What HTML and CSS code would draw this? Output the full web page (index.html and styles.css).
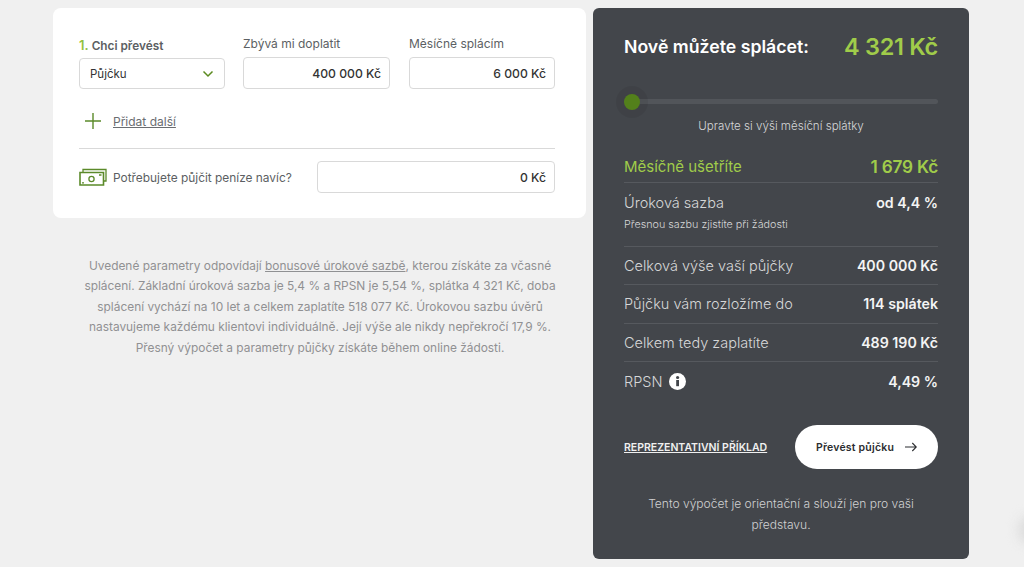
FILE: index.html
```html
<!DOCTYPE html>
<html lang="cs">
<head>
    <meta charset="UTF-8">
    <title>Převod půjčky</title>
    <link rel="stylesheet" href="styles.css">
</head>
<body>
    <div class="page">
        <div class="left">
            <div class="card">
                <div class="fields">
                    <div class="field field-select">
                        <div class="label label-strong"><span class="num">1.</span> Chci převést</div>
                        <div class="box box-select">
                            <span>Půjčku</span>
                            <svg class="chevron" width="12" height="8" viewBox="0 0 12 8"><path d="M1.5 1.5 6 6l4.5-4.5" fill="none" stroke="#5b8a1f" stroke-width="1.5"/></svg>
                        </div>
                    </div>
                    <div class="field">
                        <div class="label">Zbývá mi doplatit</div>
                        <div class="box box-value">400 000 Kč</div>
                    </div>
                    <div class="field field-last">
                        <div class="label">Měsíčně splácím</div>
                        <div class="box box-value">6 000 Kč</div>
                    </div>
                </div>
                <div class="add-row">
                    <svg width="16" height="16" viewBox="0 0 16 16"><path d="M8 0v16M0 8h16" stroke="#5b8a2a" stroke-width="1.4"/></svg>
                    <a class="add-link">Přidat další</a>
                </div>
                <div class="extra-row">
                    <svg class="money" width="28" height="18" viewBox="0 0 28 18" fill="none" stroke="#5b8a2a" stroke-width="1.3">
                        <path d="M4 4V1.5h23V13h-2"/>
                        <path d="M1 4.5h23.500V17H1z" stroke-width="1.6"/>
                        <circle cx="12.500" cy="11" r="2.600"/>
                        <path d="M3 14.800h2M20 7h2.500"/>
                    </svg>
                    <span class="extra-label">Potřebujete půjčit peníze navíc?</span>
                    <div class="box box-value box-extra">0 Kč</div>
                </div>
            </div>
            <p class="note">Uvedené parametry odpovídají <u>bonusové úrokové sazbě</u>, kterou získáte za včasné<br>splácení. Základní úroková sazba je 5,4 % a RPSN je 5,54 %, splátka 4 321 Kč, doba<br>splácení vychází na 10 let a celkem zaplatíte 518 077 Kč. Úrokovou sazbu úvěrů<br>nastavujeme každému klientovi individuálně. Její výše ale nikdy nepřekročí 17,9 %.<br>Přesný výpočet a parametry půjčky získáte během online žádosti.</p>
        </div>

        <div class="panel">
            <div class="panel-head">
                <span class="panel-title">Nově můžete splácet:</span>
                <span class="panel-amount">4 321 Kč</span>
            </div>
            <div class="slider"><span class="thumb"></span></div>
            <div class="slider-caption">Upravte si výši měsíční splátky</div>

            <div class="row row-green">
                <span>Měsíčně ušetříte</span>
                <b>1 679 Kč</b>
            </div>
            <div class="row row-rate">
                <div>
                    <span>Úroková sazba</span>
                    <small>Přesnou sazbu zjistíte při žádosti</small>
                </div>
                <b>od 4,4 %</b>
            </div>
            <div class="row"><span>Celková výše vaší půjčky</span><b>400 000 Kč</b></div>
            <div class="row"><span>Půjčku vám rozložíme do</span><b>114 splátek</b></div>
            <div class="row"><span>Celkem tedy zaplatíte</span><b>489 190 Kč</b></div>
            <div class="row row-last">
                <span class="rpsn">RPSN
                    <svg width="17" height="17" viewBox="0 0 17 17"><circle cx="8.500" cy="8.500" r="8.500" fill="#fff"/><rect x="7.200" y="7" width="2.800" height="6.200" fill="#43464b"/><circle cx="8.600" cy="4.500" r="1.600" fill="#43464b"/></svg>
                </span>
                <b>4,49 %</b>
            </div>

            <div class="actions">
                <a class="example-link">REPREZENTATIVNÍ PŘÍKLAD</a>
                <button class="cta">Převést půjčku
                    <svg width="12" height="10" viewBox="0 0 12 10"><path d="M0 5h11M7.300 1l4 4-4 4" fill="none" stroke="#2b2d30" stroke-width="1.100"/></svg>
                </button>
            </div>
            <p class="disclaimer">Tento výpočet je orientační a slouží jen pro vaši představu.</p>
        </div>
    </div>
    <div class="corner-blob"></div>
</body>
</html>
```

FILE: styles.css
```css
html, body {
    height: 100%;
}

body {
    margin: 0;
    background-color: #f0f0f0;
    font-family: Inter, "Liberation Sans", sans-serif;
    color: #44464b;
    overflow: hidden;
}

.page {
    display: flex;
    gap: 7px;
    padding: 8px 0 0 53px;
}

.left {
    width: 533px;
}

.card {
    background-color: white;
    border-radius: 8px;
    height: 210px;
    box-sizing: border-box;
    padding: 28px 31px 0 26px;
}

.fields {
    display: flex;
    gap: 18px;
}

.field {
    width: 147px;
}

.field-select {
    width: 146px;
}

.field-last {
    width: 146px;
    margin-left: 1px;
}

.label {
    font-size: 12px;
    line-height: 16px;
    color: #5c5f63;
    margin-bottom: 5px;
}

.label-strong {
    font-size: 11.800px;
    font-weight: 600;
    padding-top: 1px;
    margin-bottom: 4px;
}

.num {
    color: #93c13e;
    font-size: 13px;
}

.box {
    display: flex;
    align-items: center;
    height: 32px;
    box-sizing: border-box;
    border: 1px solid #d9d9d9;
    border-radius: 4px;
    background-color: white;
    font-size: 12.200px;
    font-weight: 500;
    color: #333;
    padding: 0 8px 0 10px;
}

.box-select {
    justify-content: space-between;
    font-size: 11.500px;
    font-weight: 400;
    height: 31px;
    padding-right: 10px;
}

.box-value {
    justify-content: flex-end;
}

.add-row {
    display: flex;
    align-items: center;
    gap: 12px;
    padding: 24px 0 0 6px;
    height: 16px;
    margin-bottom: 19px;
}

.add-link {
    font-size: 12px;
    color: #6a6d71;
    text-decoration: underline;
}

.extra-row {
    display: flex;
    align-items: center;
    border-top: 1px solid #d9d9d9;
    padding-top: 12px;
}

.money {
    margin-right: 6px;
    flex-shrink: 0;
}

.extra-label {
    font-size: 11.900px;
    color: #5c5f63;
    width: 204px;
    white-space: nowrap;
}

.box-extra {
    width: 238px;
}

.note {
    margin: 38px 0 0;
    font-size: 11.900px;
    line-height: 20.400px;
    color: #909193;
    text-align: center;
    white-space: nowrap;
    padding-left: 1px;
}

.panel {
    width: 376px;
    height: 551px;
    box-sizing: border-box;
    background-color: #43464b;
    border-radius: 6px;
    padding: 23px 31px 0;
    color: #d6d7d8;
}

.panel-head {
    display: flex;
    justify-content: space-between;
    align-items: center;
    height: 30px;
}

.panel-title {
    font-size: 17.700px;
    font-weight: 600;
    color: white;
}

.panel-amount {
    font-size: 23.500px;
    font-weight: 600;
    color: #a0cc4a;
    letter-spacing: -0.3px;
}

.slider {
    position: relative;
    height: 5px;
    border-radius: 3px;
    background-color: #52555a;
    margin-top: 38px;
}

.thumb {
    position: absolute;
    left: 0;
    top: -5.500px;
    width: 16px;
    height: 16px;
    border-radius: 50%;
    background-color: #53801b;
    box-shadow: 0 0 0 8px rgba(0, 0, 0, 0.06);
}

.slider-caption {
    text-align: center;
    font-size: 11.600px;
    font-weight: 300;
    line-height: 16px;
    margin-top: 14px;
    margin-bottom: 16px;
}

.row {
    display: flex;
    justify-content: space-between;
    align-items: center;
    height: 38.300px;
    border-bottom: 1px solid #56595e;
    box-sizing: border-box;
    font-size: 14.500px;
    font-weight: 300;
}

.row b {
    font-size: 14.200px;
    font-weight: 600;
    color: #f4f4f4;
}

.row-green {
    height: 33px;
    color: #a0cc4a;
    font-size: 15px;
    font-weight: 400;
}

.row-green b {
    color: #a0cc4a;
    font-size: 17.200px;
    letter-spacing: -0.2px;
}

.row-rate {
    height: 64px;
    align-items: flex-start;
    padding-top: 11px;
}

.row-rate small {
    display: block;
    font-size: 10.750px;
    margin-top: 7px;
}

.row-last {
    border-bottom: none;
}

.rpsn {
    display: flex;
    align-items: center;
    gap: 7px;
}

.actions {
    display: flex;
    justify-content: space-between;
    align-items: center;
    margin-top: 25px;
}

.example-link {
    font-size: 10.500px;
    font-weight: 600;
    color: #f0f0f0;
    text-decoration: underline;
}

.cta {
    display: flex;
    align-items: center;
    justify-content: center;
    gap: 11px;
    width: 143px;
    height: 44px;
    border: none;
    border-radius: 22px;
    background-color: white;
    color: #2b2d30;
    font-family: inherit;
    font-size: 10.500px;
    font-weight: 600;
    letter-spacing: 0.2px;
}

.disclaimer {
    margin: 25px 0 0;
    font-size: 12.050px;
    font-weight: 300;
    line-height: 20.500px;
    text-align: center;
    color: #d0d1d2;
}

.corner-blob {
    position: absolute;
    left: 1018px;
    top: 515px;
    width: 30px;
    height: 30px;
    border-radius: 50%;
    background-color: #dcdcdc;
    filter: blur(6px);
}
```
